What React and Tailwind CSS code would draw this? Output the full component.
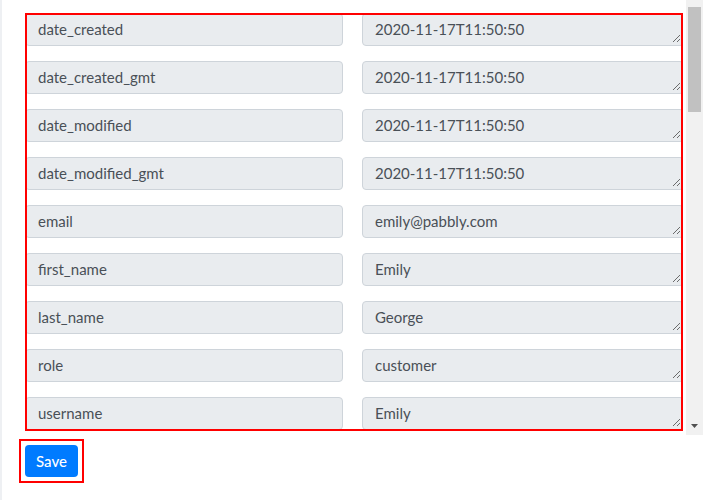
const fields = [
  { name: 'date_created', value: '2020-11-17T11:50:50' },
  { name: 'date_created_gmt', value: '2020-11-17T11:50:50' },
  { name: 'date_modified', value: '2020-11-17T11:50:50' },
  { name: 'date_modified_gmt', value: '2020-11-17T11:50:50' },
  { name: 'email', value: 'emily@pabbly.com' },
  { name: 'first_name', value: 'Emily' },
  { name: 'last_name', value: 'George' },
  { name: 'role', value: 'customer' },
  { name: 'username', value: 'Emily' },
];

const ResizeGrip = () => (
  <svg className="absolute right-[2px] bottom-[2px]" width="9" height="9" viewBox="0 0 9 9">
    <path d="M8 1 L1 8 M8 5 L5 8" stroke="#6b6b6b" strokeWidth="1" />
  </svg>
);

const FieldRow = ({ name, value }) => (
  <div className="flex gap-[19px] mb-[15px] shrink-0">
    <div className="w-[318px] h-[33px] shrink-0 flex items-center px-3 bg-[#e9ecef] border border-[#ced4da] rounded">
      {name}
    </div>
    <div className="relative w-[322px] h-[33px] shrink-0 flex items-center px-3 bg-[#e9ecef] border border-[#ced4da] rounded">
      {value}
      <ResizeGrip />
    </div>
  </div>
);

export default function App() {
  return (
    <div
      className="flex w-[726px] h-[500px] bg-white text-[15px] text-[#495057]"
      style={{ fontFamily: 'Lato, "Open Sans", sans-serif' }}
    >
      <div className="w-[2px] bg-[#eef0f3] shrink-0" />
      <div className="flex flex-col">
        <div className="flex h-[435px]">
          {/* mapping list */}
          <div className="w-[684px] pl-[23px] pt-[13px]">
            <div className="w-[658px] h-[418px] border-2 border-[#ff0000] overflow-hidden">
              <div className="flex flex-col -mt-[2px] -ml-[2px]">
                {fields.map((f) => (
                  <FieldRow key={f.name} {...f} />
                ))}
              </div>
            </div>
          </div>
          {/* scrollbar */}
          <div className="w-[17px] bg-[#f1f1f1] flex flex-col items-center">
            <div className="w-[13px] h-[105px] mt-[7px] bg-[#c1c1c1]" />
            <div className="flex-1" />
            <svg className="mb-[7px]" width="7" height="4" viewBox="0 0 7 4">
              <path d="M0 0 H7 L3.5 4 Z" fill="#505050" />
            </svg>
          </div>
        </div>
        <div className="pl-[17px] pt-[4px]">
          <div className="inline-flex border-2 border-[#ff0000] p-1">
            <button className="w-[53px] h-[32px] rounded bg-[#007bff] text-white font-medium">
              Save
            </button>
          </div>
        </div>
      </div>
    </div>
  );
}
